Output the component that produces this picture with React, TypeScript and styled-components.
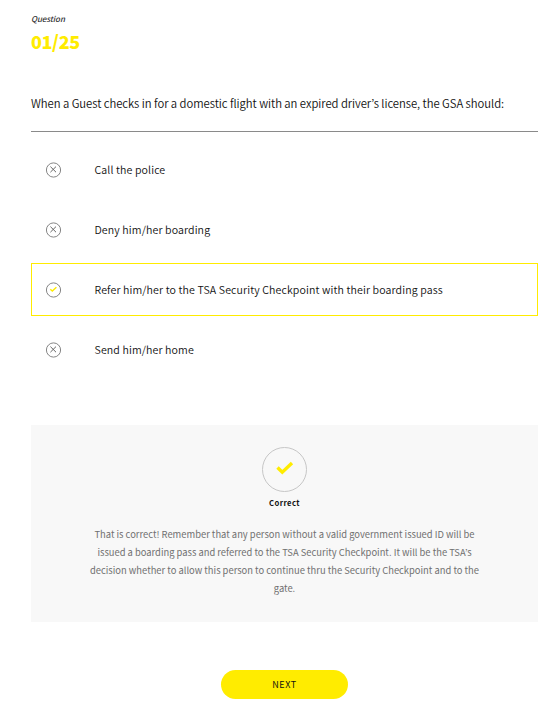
import React from "react";
import styled, { createGlobalStyle } from "styled-components";

const GlobalStyle = createGlobalStyle`
  * { box-sizing: border-box; }
  body {
    margin: 0;
    background: #fff;
    color: #111;
    font-family: "Noto Sans CJK KR", "Noto Sans", sans-serif;
  }
`;

const Page = styled.main`
  height: 709px;
  padding: 12px 11px 0 31px;
  display: flex;
  flex-direction: column;
  overflow: hidden;
`;

const Label = styled.div`
  font-size: 8px;
  line-height: 14px;
  font-style: italic;
  font-weight: 500;
  letter-spacing: -0.1px;
  color: #333;
`;

const Counter = styled.div`
  margin-top: 3px;
  font-size: 18px;
  line-height: 24px;
  font-weight: 900;
  letter-spacing: -0.4px;
  color: #ffec00;
`;

const Question = styled.h1`
  margin: 40px 0 0;
  height: 39px;
  border-bottom: 1px solid #8a8a8a;
  font-size: 11.3px;
  line-height: 20px;
  font-weight: 350;
  letter-spacing: -0.05px;
  white-space: nowrap;
`;

const Answers = styled.ul`
  list-style: none;
  margin: 11px 0 0;
  padding: 0;
  display: grid;
  gap: 7px;
`;

const Answer = styled.li<{ $selected?: boolean }>`
  height: 53px;
  padding-left: 14px;
  display: flex;
  align-items: center;
  gap: 33px;
  border: 1px solid ${(p) => (p.$selected ? "#ffec00" : "transparent")};
  font-size: 10.6px;
  line-height: 18px;
  font-weight: 350;
  letter-spacing: 0.12px;
  white-space: nowrap;
`;

const AnswerText = styled.span`
  margin-left: -0.5px;
`;

const Mark = styled.svg`
  width: 16px;
  height: 16px;
  flex: none;
  fill: none;
`;

const Feedback = styled.section`
  margin-top: 49px;
  height: 197px;
  padding-top: 22px;
  background: #f8f8f8;
  display: flex;
  flex-direction: column;
  align-items: center;
`;

const Badge = styled.svg`
  width: 45px;
  height: 45px;
  fill: none;
`;

const Verdict = styled.h2`
  margin: 5px 0 0;
  font-size: 7.7px;
  line-height: 12px;
  font-weight: 700;
  letter-spacing: 0.4px;
  color: #111;
`;

const Explanation = styled.p`
  margin: 16px 0 0;
  font-size: 9.4px;
  line-height: 18px;
  text-align: center;
  color: #707070;
  white-space: pre-line;
`;

const NextButton = styled.button`
  margin: 48px 0 0;
  align-self: center;
  width: 127px;
  height: 29px;
  padding: 0;
  border: 0;
  border-radius: 15px;
  background: #ffec00;
  color: #111;
  font: 400 9px/29px "Noto Sans CJK KR", "Noto Sans", sans-serif;
  letter-spacing: 0.6px;
`;

const answers = [
  { text: "Call the police" },
  { text: "Deny him/her boarding" },
  { text: "Refer him/her to the TSA Security Checkpoint with their boarding pass", correct: true },
  { text: "Send him/her home" },
];

const explanation = `That is correct! Remember that any person without a valid government issued ID will be
issued a boarding pass and referred to the TSA Security Checkpoint. It will be the TSA’s
decision whether to allow this person to continue thru the Security Checkpoint and to the
gate.`;

function AnswerMark({ correct }: { correct?: boolean }) {
  return (
    <Mark viewBox="0 0 16 16" aria-hidden="true">
      <circle cx="7.5" cy="8" r="7.1" stroke="#858585" />
      {correct ? (
        <path d="M4.3 7.2 6.3 9 10.4 5.2" stroke="#ffec00" strokeWidth="1.4" />
      ) : (
        <path d="M4.4 4.6 10 10.2M10 4.6 4.4 10.2" stroke="#666" />
      )}
    </Mark>
  );
}

export default function App() {
  return (
    <Page>
      <GlobalStyle />
      <Label>Question</Label>
      <Counter>01/25</Counter>
      <Question>When a Guest checks in for a domestic flight with an expired driver’s license, the GSA should:</Question>
      <Answers>
        {answers.map((a) => (
          <Answer key={a.text} $selected={a.correct}>
            <AnswerMark correct={a.correct} />
            <AnswerText>{a.text}</AnswerText>
          </Answer>
        ))}
      </Answers>
      <Feedback>
        <Badge viewBox="0 0 45 45" aria-hidden="true">
          <circle cx="22.5" cy="22.5" r="22" stroke="#c6c6c6" />
          <path d="M15.5 20.5 20.3 25.2 30 16" stroke="#ffec00" strokeWidth="3.4" />
        </Badge>
        <Verdict>Correct</Verdict>
        <Explanation>{explanation}</Explanation>
      </Feedback>
      <NextButton type="button">NEXT</NextButton>
    </Page>
  );
}
